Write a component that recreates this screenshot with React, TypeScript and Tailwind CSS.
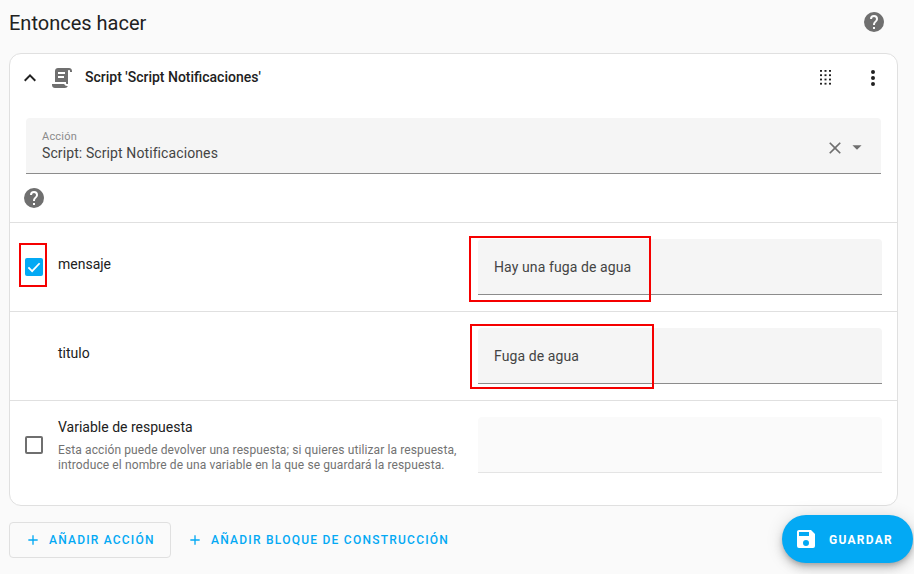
const P = {
  help: "M15.07,11.25L14.17,12.17C13.45,12.89 13,13.5 13,15H11V14.5C11,13.39 11.45,12.39 12.17,11.67L13.41,10.41C13.78,10.05 14,9.55 14,9C14,7.89 13.1,7 12,7A2,2 0 0,0 10,9H8A4,4 0 0,1 12,5A4,4 0 0,1 16,9C16,9.88 15.64,10.67 15.07,11.25M13,19H11V17H13M12,2A10,10 0 0,0 2,12A10,10 0 0,0 12,22A10,10 0 0,0 22,12C22,6.47 17.5,2 12,2Z",
  script: "M17.8,20C17.4,21.2 16.3,22 15,22H5C3.3,22 2,20.7 2,19V18H5L14.2,18C14.6,19.2 15.7,20 17,20H17.8M19,2C20.7,2 22,3.3 22,5V6H20V5C20,4.4 19.6,4 19,4C18.4,4 18,4.4 18,5V18H17C16.4,18 16,17.6 16,17V16H5V5C5,3.3 6.3,2 8,2H19M8,6V8H15V6H8M8,10V12H14V10H8Z",
  save: "M15,9H5V5H15M12,19A3,3 0 0,1 9,16A3,3 0 0,1 12,13A3,3 0 0,1 15,16A3,3 0 0,1 12,19M17,3H5C3.89,3 3,3.9 3,5V19A2,2 0 0,0 5,21H19A2,2 0 0,0 21,19V7L17,3Z",
  dots: "M12,16A2,2 0 0,1 14,18A2,2 0 0,1 12,20A2,2 0 0,1 10,18A2,2 0 0,1 12,16M12,10A2,2 0 0,1 14,12A2,2 0 0,1 12,14A2,2 0 0,1 10,12A2,2 0 0,1 12,10M12,4A2,2 0 0,1 14,6A2,2 0 0,1 12,8A2,2 0 0,1 10,6A2,2 0 0,1 12,4Z",
  up: "M7.41,15.41L12,10.83L16.59,15.41L18,14L12,8L6,14L7.41,15.41Z",
  close: "M19,6.41L17.59,5L12,10.59L6.41,5L5,6.41L10.59,12L5,17.59L6.41,19L12,13.41L17.59,19L19,17.59L13.41,12L19,6.41Z",
  down: "M7,10L12,15L17,10H7Z",
  plus: "M19,13H13V19H11V13H5V11H11V5H13V11H19V13Z",
};

function Icon({ d, className }: { d: string; className: string }) {
  return (
    <svg viewBox="0 0 24 24" fill="currentColor" className={className}>
      <path d={d} />
    </svg>
  );
}

function Grip() {
  const cols = [0, 4.5, 9];
  const rows = [0, 4.3, 8.6, 12.8];
  return (
    <svg viewBox="0 0 11 15" fill="currentColor" className="ml-auto h-[15px] w-[11px] text-[#212121]">
      {rows.map((y) =>
        cols.map((x) => <rect key={`${x}-${y}`} x={x} y={y} width="2" height="1.8" />)
      )}
    </svg>
  );
}

function Check({ checked }: { checked: boolean }) {
  return checked ? (
    <span className="flex h-[18px] w-[18px] items-center justify-center rounded-[2px] bg-[#03a9f4]">
      <svg viewBox="0 0 24 24" className="h-[18px] w-[18px]" fill="none" stroke="#fff" strokeWidth="2.4">
        <path d="M4.5 12.5l5 5L19.5 7" />
      </svg>
    </span>
  ) : (
    <span className="block h-[18px] w-[18px] rounded-[2px] border-2 border-[#6f6f6f]" />
  );
}

function Field({ value, disabled }: { value?: string; disabled?: boolean }) {
  return (
    <div
      className={`flex h-14 w-[404px] items-center rounded-t-[4px] px-4 pt-[1px] text-[14px] tracking-[0.1px] text-[#444] ${
        disabled ? "border-b border-[#e4e4e4] bg-[#fafafa]" : "border-b border-[#8c8c8c] bg-[#f5f5f5]"
      }`}
    >
      {value}
    </div>
  );
}

function Marker({ className }: { className: string }) {
  return <div className={`pointer-events-none absolute border-2 border-[#f50000] ${className}`} />;
}

export default function App() {
  return (
    <div className="relative h-[574px] w-[914px] overflow-hidden bg-[#fafafa] font-['Roboto',sans-serif] text-[#212121]">
      <div className="flex h-[53px] items-start justify-between pl-[9px] pr-7 pt-[8px]">
        <h1 className="text-[20px] leading-[30px] font-normal">Entonces hacer</h1>
        <Icon d={P.help} className="mt-[2px] h-6 w-6 text-[#6f6f6f]" />
      </div>

      <div className="ml-[9px] w-[889px] rounded-xl border border-[#e0e0e0] bg-white">
        <div className="flex h-[47px] items-center pl-[8px] pr-[12px]">
          <Icon d={P.up} className="h-6 w-6 text-[#212121]" />
          <Icon d={P.script} className="ml-[8px] h-6 w-6 text-[#6f6f6f]" />
          <span className="ml-[11px] text-[14px] font-medium">Script 'Script Notificaciones'</span>
          <Grip />
          <Icon d={P.dots} className="ml-[30px] h-6 w-6 text-[#212121]" />
        </div>

        <div className="px-4 pt-[17px]">
          <div className="flex h-14 items-center justify-between rounded-t-[4px] border-b border-[#8c8c8c] bg-[#f5f5f5] pl-4 pr-[13px]">
            <div className="flex flex-col pt-[2px]">
              <span className="text-[11px] leading-[13px] tracking-[0.2px] text-[#8a8a8a]">Acción</span>
              <span className="text-[14px] leading-[20px] tracking-[0.1px] text-[#444]">
                Script: Script Notificaciones
              </span>
            </div>
            <div className="mt-[4px] flex items-center">
              <Icon d={P.close} className="h-[20px] w-[20px] text-[#6f6f6f]" />
              <Icon d={P.down} className="ml-[1px] -mt-[2px] h-[22px] w-[22px] text-[#6f6f6f]" />
            </div>
          </div>
          <div className="flex h-12 items-center">
            <Icon d={P.help} className="-ml-[4px] h-6 w-6 text-[#6f6f6f]" />
          </div>
        </div>

        <div className="flex h-[89px] border-t border-[#e0e0e0] pt-4">
          <div className="flex w-12 justify-center pt-[19px]">
            <Check checked />
          </div>
          <div className="flex-1 pt-[15px] text-[14px] leading-[20px]">mensaje</div>
          <div className="mr-[15px]">
            <Field value="Hay una fuga de agua" />
          </div>
        </div>

        <div className="flex h-[89px] border-t border-[#e0e0e0] pt-4">
          <div className="w-12" />
          <div className="flex-1 pt-[15px] text-[14px] leading-[20px]">titulo</div>
          <div className="mr-[15px]">
            <Field value="Fuga de agua" />
          </div>
        </div>

        <div className="flex h-[105px] border-t border-[#e0e0e0] pt-4">
          <div className="flex w-12 justify-center pt-[19px]">
            <Check checked={false} />
          </div>
          <div className="flex-1">
            <div className="text-[14px] leading-[20px]">Variable de respuesta</div>
            <p className="mt-[6px] text-[12px] leading-[15px] tracking-[0.11px] text-[#727272]">
              Esta acción puede devolver una respuesta; si quieres utilizar la respuesta,
              <br />
              introduce el nombre de una variable en la que se guardará la respuesta.
            </p>
          </div>
          <div className="mr-[15px]">
            <Field disabled />
          </div>
        </div>
      </div>

      <div className="ml-[9px] mt-4 flex items-center">
        <button className="flex h-[36px] w-[162px] items-center rounded-[4px] border border-[#e0e0e0] pl-[15px] text-[12px] font-medium tracking-[1.2px] text-[#03a9f4]">
          <Icon d={P.plus} className="h-[16px] w-[16px]" />
          <span className="ml-[8px]">AÑADIR ACCIÓN</span>
        </button>
        <button className="ml-[16px] flex h-[36px] items-center text-[12px] font-medium tracking-[1.24px] text-[#03a9f4]">
          <Icon d={P.plus} className="h-[16px] w-[16px]" />
          <span className="ml-[8px]">AÑADIR BLOQUE DE CONSTRUCCIÓN</span>
        </button>
      </div>

      <button className="absolute left-[782px] top-[515px] flex h-12 w-[131px] items-center rounded-full bg-[#03a9f4] pl-[12px] text-[12px] font-medium tracking-[1.25px] text-white shadow-[0_3px_5px_-1px_rgba(0,0,0,0.2),0_6px_10px_0_rgba(0,0,0,0.14),0_1px_18px_0_rgba(0,0,0,0.12)]">
        <Icon d={P.save} className="h-6 w-6" />
        <span className="ml-[11px] mt-[1px] font-bold">GUARDAR</span>
      </button>

      <Marker className="left-[19px] top-[243px] h-[44px] w-[28px]" />
      <Marker className="left-[469px] top-[236px] h-[66px] w-[182px]" />
      <Marker className="left-[470px] top-[324px] h-[65px] w-[184px]" />
    </div>
  );
}
